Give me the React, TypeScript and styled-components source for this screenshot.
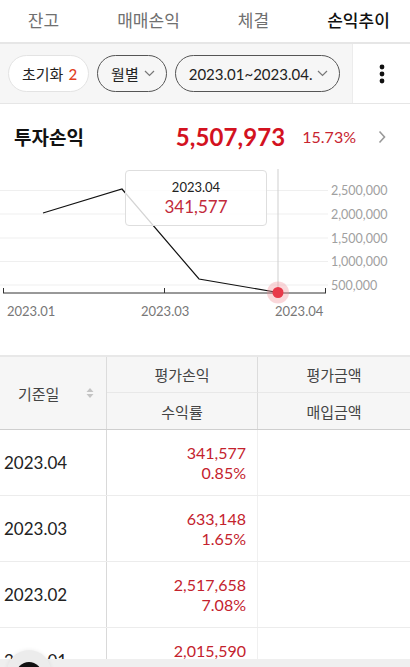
import React from 'react';
import styled, { createGlobalStyle } from 'styled-components';

const GlobalStyle = createGlobalStyle`
  html, body {
    margin: 0;
    padding: 0;
    background: #fff;
  }
  body {
    font-family: Lato, "Noto Sans CJK KR", sans-serif;
    color: #222;
    -webkit-font-smoothing: antialiased;
  }
  * { box-sizing: border-box; }
`

const Page = styled.div`
  width: 410px;
  height: 667px;
  overflow: hidden;
  position: relative;
  background: #fff;
`

const TabBar = styled.div`
  height: 44px;
  border-bottom: 2px solid #e6e6e6;
  overflow: hidden;
`
const TabStrip = styled.div`
  display: flex;
  margin-left: -9px;
  height: 44px;
`
const Tab = styled.div<{ $active?: boolean }>`
  flex: 0 0 105px;
  height: 44px;
  display: flex;
  align-items: center;
  justify-content: center;
  padding-bottom: 4px;
  font-size: 17px;
  font-weight: ${p => (p.$active ? 500 : 400)};
  color: ${p => (p.$active ? '#111' : '#707070')};
  border-bottom: 2px solid ${p => (p.$active ? '#111' : 'transparent')};
  margin-bottom: -2px;
`

const FilterBar = styled.div`
  display: flex;
  height: 60px;
  background: #f6f6f6;
  border-bottom: 1px solid #e6e6e6;
`
const Chips = styled.div`
  flex: 1;
  display: flex;
  align-items: center;
  gap: 8px;
  padding-left: 8px;
`
const Chip = styled.div<{ $outlined?: boolean }>`
  height: 37px;
  display: flex;
  align-items: center;
  gap: 5px;
  padding: 0 11px 0 13px;
  border-radius: 19px;
  font-size: 15px;
  color: #222;
  background: ${p => (p.$outlined ? 'transparent' : '#fff')};
  border: 1px solid ${p => (p.$outlined ? '#555' : '#e3e3e3')};
  white-space: nowrap;
`
const Count = styled.span`
  color: #e2401e;
  font-weight: 500;
`
const MoreButton = styled.div`
  width: 58px;
  display: flex;
  align-items: center;
  justify-content: center;
  background: #fff;
  border-left: 1px solid #ececec;
`

const Summary = styled.div`
  display: flex;
  align-items: center;
  height: 65px;
  padding: 0 24px 0 14px;
`
const SummaryTitle = styled.div`
  flex: 1;
  font-size: 19px;
  font-weight: 700;
  color: #111;
`
const BigValue = styled.div`
  font-size: 24px;
  font-weight: 700;
  color: #d3121f;
  letter-spacing: 0.1px;
`
const Rate = styled.div`
  margin-left: 17px;
  margin-right: 22px;
  font-size: 16px;
  color: #c8242f;
`

const ChartWrap = styled.div`
  position: relative;
  height: 186px;
`
const Tooltip = styled.div`
  position: absolute;
  left: 125px;
  top: 1px;
  width: 142px;
  height: 56px;
  border: 1px solid #dedede;
  border-radius: 4px;
  background: rgba(255, 255, 255, 0.82);
  display: flex;
  flex-direction: column;
  align-items: center;
  justify-content: center;
  gap: 1px;
`
const TipDate = styled.div`
  font-size: 13px;
  color: #222;
`
const TipValue = styled.div`
  font-size: 17px;
  color: #c22a3a;
`

const Table = styled.div`
  border-top: 2px solid #e8e8e8;
`
const HeadGrid = styled.div`
  display: grid;
  grid-template-columns: 107px 151px 1fr;
  grid-template-rows: 36px 36px;
  background: #f6f6f6;
  border-bottom: 1px solid #cfcfcf;
`
const HeadCell = styled.div<{ $top?: boolean; $span?: boolean; $last?: boolean }>`
  display: flex;
  align-items: center;
  justify-content: center;
  font-size: 15px;
  color: #444;
  border-right: ${p => (p.$last ? 'none' : '1px solid #dcdcdc')};
  border-bottom: ${p => (p.$top ? '1px solid #e8e8e8' : 'none')};
  grid-row: ${p => (p.$span ? '1 / span 2' : 'auto')};
`
const DateHead = styled(HeadCell)`
  justify-content: space-between;
  padding: 0 12px 0 18px;
`
const Row = styled.div`
  display: grid;
  grid-template-columns: 107px 151px 1fr;
  height: 66px;
  border-bottom: 1px solid #ececec;
`
const DateCell = styled.div`
  display: flex;
  align-items: center;
  padding-left: 4px;
  font-size: 17px;
  color: #222;
  border-right: 1px solid #d9d9d9;
`
const ValueCell = styled.div`
  display: flex;
  flex-direction: column;
  justify-content: center;
  align-items: flex-end;
  padding-right: 11px;
  font-size: 16px;
  line-height: 20px;
  color: #c4222d;
  border-right: 1px solid #f0f0f0;
`
const EmptyCell = styled.div`
  background: #fff;
`

const BottomBar = styled.div`
  position: absolute;
  left: 0;
  right: 0;
  bottom: 0;
  height: 8px;
  background: #efefef;
`
const FloatButton = styled.div`
  position: absolute;
  left: 7px;
  top: 650px;
  width: 44px;
  height: 44px;
  border-radius: 50%;
  background: #ececec;
  box-shadow: 0 0 4px rgba(0, 0, 0, 0.08);
  display: flex;
  justify-content: center;
  padding-top: 12px;
  &::after {
    content: '';
    width: 26px;
    height: 26px;
    border-radius: 50%;
    background: #111;
  }
`

const ChevronDown = () => (
  <svg width="11" height="7" viewBox="0 0 11 7">
    <polyline points="1,1 5.5,5.5 10,1" fill="none" stroke="#777" strokeWidth="1.2" />
  </svg>
)

const ChevronRight = () => (
  <svg width="8" height="14" viewBox="0 0 8 14">
    <polyline points="1.5,1.5 6.5,7 1.5,12.5" fill="none" stroke="#999" strokeWidth="1.6" />
  </svg>
)

const Dots = () => (
  <svg width="6" height="20" viewBox="0 0 6 20">
    <circle cx="3" cy="3" r="2.4" fill="#111" />
    <circle cx="3" cy="10" r="2.4" fill="#111" />
    <circle cx="3" cy="17" r="2.4" fill="#111" />
  </svg>
)

const SortIcon = () => (
  <svg width="8" height="12" viewBox="0 0 8 12">
    <polygon points="4,1 7.5,5 0.5,5" fill="#c4c4c4" />
    <polygon points="4,11 7.5,7 0.5,7" fill="#c4c4c4" />
  </svg>
)

// chart coords: page y minus chart top (169)
const gridY = [21.5, 45, 69, 92.5, 116]
const gridLabels = ['2,500,000', '2,000,000', '1,500,000', '1,000,000', '500,000']
const points = [[43, 44], [122, 20], [199, 110], [278, 123.5]]

const Chart = () => (
  <svg width="410" height="186" viewBox="0 0 410 186" style={{ display: 'block' }}>
    {gridY.map((y, i) => (
      <g key={i}>
        <line x1="0" x2="328" y1={y} y2={y} stroke="#efefef" strokeWidth="1" />
        <text x="331" y={y + 4.5} fontSize="12.5" fill="#a0a0a0" fontFamily="Lato, sans-serif">{gridLabels[i]}</text>
      </g>
    ))}
    <line x1="278" x2="278" y1="0" y2="124" stroke="#cfcfcf" strokeWidth="1" />
    <polyline points={points.map(p => p.join(',')).join(' ')} fill="none" stroke="#111" strokeWidth="1.2" />
    <line x1="3" x2="326" y1="124" y2="124" stroke="#333" strokeWidth="1" />
    <line x1="3.5" x2="3.5" y1="119" y2="124" stroke="#333" strokeWidth="1" />
    <line x1="164.5" x2="164.5" y1="119" y2="124" stroke="#333" strokeWidth="1" />
    <line x1="325.5" x2="325.5" y1="119" y2="124" stroke="#333" strokeWidth="1" />
    <circle cx="278" cy="123.5" r="11" fill="#f28b95" opacity="0.35" />
    <circle cx="278" cy="123.5" r="5.5" fill="#e8394a" />
    <text x="7" y="146.5" fontSize="13" fill="#777" fontFamily="Lato, sans-serif">2023.01</text>
    <text x="141" y="146.5" fontSize="13" fill="#777" fontFamily="Lato, sans-serif">2023.03</text>
    <text x="275" y="146.5" fontSize="13" fill="#777" fontFamily="Lato, sans-serif">2023.04</text>
  </svg>
)

const rows = [
  { date: '2023.04', value: '341,577', rate: '0.85%' },
  { date: '2023.03', value: '633,148', rate: '1.65%' },
  { date: '2023.02', value: '2,517,658', rate: '7.08%' },
  { date: '2023.01', value: '2,015,590', rate: '5.67%' },
]

function App() {
  return (
    <Page>
      <GlobalStyle />
      <TabBar>
        <TabStrip>
          <Tab>잔고</Tab>
          <Tab>매매손익</Tab>
          <Tab>체결</Tab>
          <Tab $active>손익추이</Tab>
        </TabStrip>
      </TabBar>

      <FilterBar>
        <Chips>
          <Chip>초기화 <Count>2</Count></Chip>
          <Chip $outlined>월별 <ChevronDown /></Chip>
          <Chip $outlined>2023.01~2023.04. <ChevronDown /></Chip>
        </Chips>
        <MoreButton><Dots /></MoreButton>
      </FilterBar>

      <Summary>
        <SummaryTitle>투자손익</SummaryTitle>
        <BigValue>5,507,973</BigValue>
        <Rate>15.73%</Rate>
        <ChevronRight />
      </Summary>

      <ChartWrap>
        <Chart />
        <Tooltip>
          <TipDate>2023.04</TipDate>
          <TipValue>341,577</TipValue>
        </Tooltip>
      </ChartWrap>

      <Table>
        <HeadGrid>
          <DateHead $span>기준일 <SortIcon /></DateHead>
          <HeadCell $top>평가손익</HeadCell>
          <HeadCell $top $last>평가금액</HeadCell>
          <HeadCell>수익률</HeadCell>
          <HeadCell $last>매입금액</HeadCell>
        </HeadGrid>
        {rows.map(r => (
          <Row key={r.date}>
            <DateCell>{r.date}</DateCell>
            <ValueCell>
              <span>{r.value}</span>
              <span>{r.rate}</span>
            </ValueCell>
            <EmptyCell />
          </Row>
        ))}
      </Table>

      <BottomBar />
      <FloatButton />
    </Page>
  );
}

export default App;
